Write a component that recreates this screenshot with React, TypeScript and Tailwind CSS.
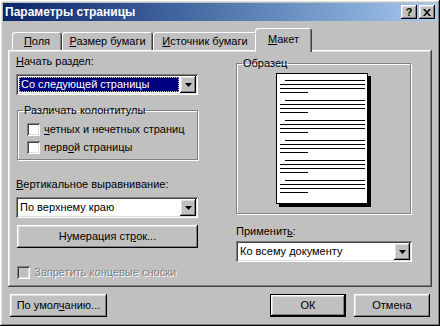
import React from "react";

const raised =
  "shadow-[inset_-1px_-1px_0_#000,inset_1px_1px_0_#fff,inset_-2px_-2px_0_#808080,inset_2px_2px_0_#dfdfdf]";
const sunken =
  "shadow-[inset_1px_1px_0_#808080,inset_-1px_-1px_0_#fff,inset_2px_2px_0_#404040,inset_-2px_-2px_0_#dfdfdf]";

function Arrow() {
  return (
    <div className={`w-[16px] h-[17px] bg-[#c0c0c0] ${raised} flex items-center justify-center`}>
      <svg width="7" height="4" viewBox="0 0 7 4">
        <path d="M0 0h7L3.5 4z" fill="#000" />
      </svg>
    </div>
  );
}

function Combo({ text, focused = false }: { text: string; focused?: boolean }) {
  return (
    <div className={`h-[21px] bg-white ${sunken} p-[2px] flex`}>
      <div className="flex-1 min-w-0 flex p-[1px]">
        {focused ? (
          <div className="flex-1 bg-[#000080] text-white border border-dotted border-[#c0c0c0] pl-[1px] leading-[13px]">
            {text}
          </div>
        ) : (
          <div className="flex-1 pl-[1px] leading-[15px]">{text}</div>
        )}
      </div>
      <Arrow />
    </div>
  );
}

function Check({ children, disabled = false }: { children: React.ReactNode; disabled?: boolean }) {
  return (
    <div className="flex items-center gap-[4px] h-[13px]">
      <div className={`w-[13px] h-[13px] ${disabled ? "bg-[#c0c0c0]" : "bg-white"} ${sunken}`} />
      <span
        className={
          disabled ? "text-[#808080] [text-shadow:1px_1px_0_#fff]" : "text-black"
        }
      >
        {children}
      </span>
    </div>
  );
}

function Btn({
  children,
  w,
  isDefault = false,
}: {
  children: React.ReactNode;
  w: string;
  isDefault?: boolean;
}) {
  return (
    <div
      className={`${w} h-[23px] ${isDefault ? "border border-black" : ""} bg-[#c0c0c0] flex`}
    >
      <div className={`flex-1 ${raised} flex items-center justify-center`}>{children}</div>
    </div>
  );
}

function Tab({ label, w, selected = false }: { label: React.ReactNode; w: string; selected?: boolean }) {
  return (
    <div
      className={`${w} ${
        selected ? "h-[24px] -mb-[2px] -ml-[2px] pb-[6px]" : "h-[18px] pb-[2px]"
      } bg-[#c0c0c0] rounded-t-[3px] shadow-[inset_1px_1px_0_#fff,inset_-1px_0_0_#404040,inset_-2px_0_0_#808080] flex items-end justify-center`}
    >
      {label}
    </div>
  );
}

function Group({ legend, className, children }: { legend: string; className: string; children: React.ReactNode }) {
  return (
    <fieldset
      className={`${className} border border-[#808080] shadow-[inset_1px_1px_0_#fff,1px_1px_0_#fff]`}
    >
      <legend className="ml-[5px] px-[1px] leading-[13px]">{legend}</legend>
      {children}
    </fieldset>
  );
}

function PagePreview() {
  const groups = [7, 27, 47, 67, 87, 107];
  return (
    <svg width="95" height="134" viewBox="0 0 95 134" className="block">
      <rect x="3" y="3" width="92" height="131" fill="#000" />
      <rect x="0.5" y="0.5" width="91" height="130" fill="#fff" stroke="#000" />
      {groups.map((g) => (
        <g key={g} stroke="#000" strokeWidth="1">
          <line x1="9" y1={g + 0.5} x2="89" y2={g + 0.5} />
          <line x1="4" y1={g + 4.5} x2="89" y2={g + 4.5} />
          <line x1="4" y1={g + 8.5} x2="89" y2={g + 8.5} />
          <line x1="4" y1={g + 12.5} x2="32" y2={g + 12.5} />
        </g>
      ))}
    </svg>
  );
}

export default function App() {
  return (
    <div
      className={`w-[440px] h-[326px] bg-[#c0c0c0] ${raised} p-[3px] flex flex-col font-['Liberation_Sans',Arial,sans-serif] text-[11px] leading-[13px] text-black`}
    >
      {/* Title bar */}
      <div className="h-[18px] bg-gradient-to-r from-[#0a246a] to-[#a6caf0] flex items-center pl-[2px] pr-[2px]">
        <span className="text-white font-bold text-[12px] leading-[14px] flex-1">Параметры страницы</span>
        <div className="flex gap-[2px]">
          <div className={`w-[16px] h-[14px] bg-[#c0c0c0] ${raised} flex items-center justify-center font-bold text-[11px] leading-none`}>
            ?
          </div>
          <div className={`w-[16px] h-[14px] bg-[#c0c0c0] ${raised} flex items-center justify-center`}>
            <svg width="8" height="7" viewBox="0 0 8 7">
              <path d="M0 0h2l2 2.5L6 0h2L5 3.5 8 7H6L4 4.5 2 7H0l3-3.5z" fill="#000" />
            </svg>
          </div>
        </div>
      </div>

      {/* Tabs */}
      <div className="mt-[7px] pl-[9px] flex items-end relative z-10">
        <Tab w="w-[50px]" label={<span><u>П</u>оля</span>} />
        <Tab w="w-[91px]" label={<span><u>Р</u>азмер бумаги</span>} />
        <Tab w="w-[104px]" label={<span><u>И</u>сточник бумаги</span>} />
        <Tab w="w-[57px]" selected label={<span><u>М</u>акет</span>} />
      </div>

      {/* Panel */}
      <div className={`ml-[5px] w-[424px] h-[237px] shadow-[inset_-1px_-1px_0_#404040,inset_1px_1px_0_#fff,inset_-2px_-2px_0_#808080,inset_2px_2px_0_#dfdfdf] flex pl-[8px] pt-[5px]`}>
        <div className="w-[182px] flex flex-col">
          <div><u>Н</u>ачать раздел:</div>
          <div className="mt-[6px]">
            <Combo text="Со следующей страницы" focused />
          </div>
          <Group legend="Различать колонтитулы" className="mt-[9px] ml-[1px] h-[56px]">
            <div className="pl-[9px] pt-[6px] flex flex-col gap-[5px]">
              <Check>
                <u>ч</u>етных и нечетных страниц
              </Check>
              <Check>
                перв<u>о</u>й страницы
              </Check>
            </div>
          </Group>
          <div className="mt-[18px]">
            <u>В</u>ертикальное выравнивание:
          </div>
          <div className="mt-[6px]">
            <Combo text="По верхнему краю" />
          </div>
          <div className="mt-[7px] ml-[1px]">
            <Btn w="w-[181px]">
              <span>
                Нумерация ст<u>р</u>ок...
              </span>
            </Btn>
          </div>
          <div className="mt-[18px] ml-[1px]">
            <Check disabled>Запретить концевые сноски</Check>
          </div>
        </div>

        <div className="ml-[38px] w-[176px] flex flex-col">
          <Group legend="Образец" className="mt-[2px] h-[157px] w-[175px]">
            <div className="flex justify-center pt-[3px]">
              <PagePreview />
            </div>
          </Group>
          <div className="mt-[11px]">
            Применит<u>ь</u>:
          </div>
          <div className="mt-[3px]">
            <Combo text="Ко всему документу" />
          </div>
        </div>
      </div>

      {/* Bottom buttons */}
      <div className="mt-[7px] flex px-[7px]">
        <Btn w="w-[97px]">
          <span>
            По умол<u>ч</u>анию...
          </span>
        </Btn>
        <div className="flex-1" />
        <div className="flex gap-[8px]">
          <Btn w="w-[76px]" isDefault>
            ОК
          </Btn>
          <Btn w="w-[76px]">Отмена</Btn>
        </div>
      </div>
    </div>
  );
}
